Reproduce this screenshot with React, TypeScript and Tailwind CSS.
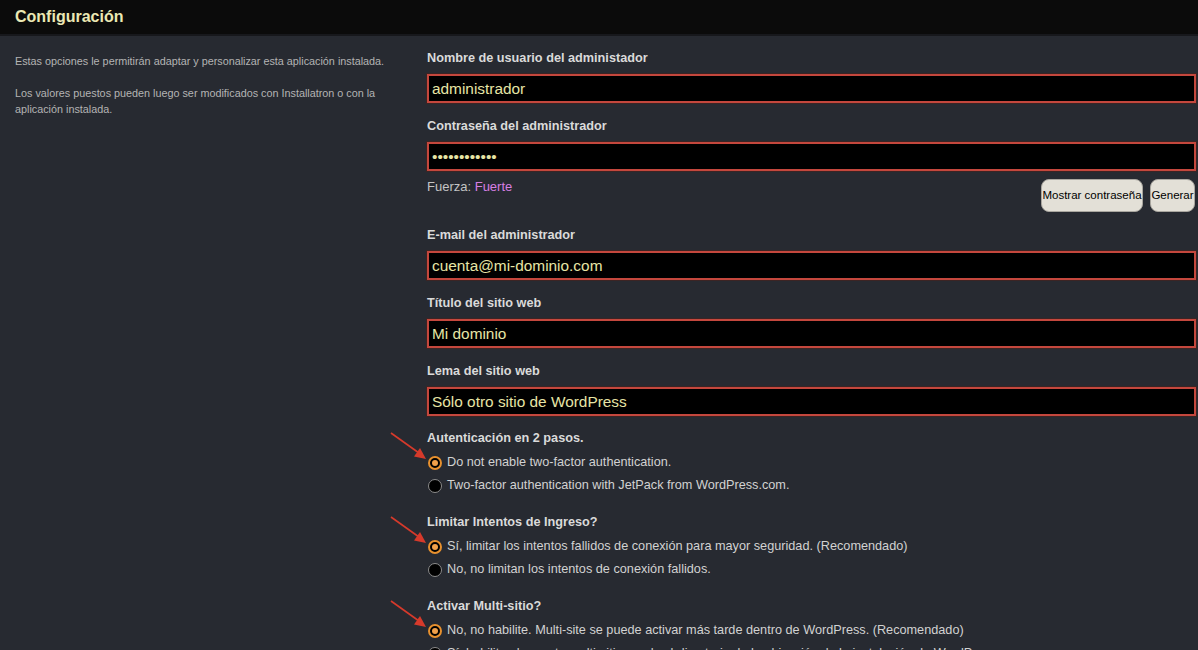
import type { ReactNode } from 'react'

const font = { fontFamily: '"Liberation Sans", Arial, sans-serif' }

function Field({ label, children }: { label: string; children: ReactNode }) {
  return (
    <div className="mb-[15px]">
      <p className="h-[16px] text-[12.7px] font-bold leading-[16px] text-[#dadada]">{label}</p>
      {children}
    </div>
  )
}

function TextBox({ value }: { value: string }) {
  return (
    <div className="mt-[8px] flex h-[29px] items-center border-2 border-[#c4473d] bg-black pl-[3px] shadow-[0_0_0_1px_#3b2424] text-[15.4px] text-[#e7e5a6]">
      {value}
    </div>
  )
}

function Arrow() {
  return (
    <svg
      className="absolute left-[-38px] top-[1px]"
      width="40"
      height="30"
      viewBox="0 0 40 30"
    >
      <line x1="2" y1="2" x2="30" y2="22" stroke="#d63a2b" strokeWidth="1.6" />
      <polygon points="37,28 25,25.5 31,17" fill="#d63a2b" />
    </svg>
  )
}

function Radio({ checked, label }: { checked?: boolean; label: string }) {
  return (
    <div className="flex h-[23px] items-center">
      {checked ? (
        <span className="ml-[1px] flex h-[14px] w-[14px] items-center justify-center rounded-full border-2 border-[#e8912e] bg-black">
          <span className="h-[6px] w-[6px] rounded-full bg-[#f0a04a]" />
        </span>
      ) : (
        <span className="ml-[1px] h-[14px] w-[14px] rounded-full border-[1.5px] border-[#8c8c8c] bg-black" />
      )}
      <span className="ml-[5px] whitespace-nowrap text-[12.7px] text-[#d2d2d2]">{label}</span>
    </div>
  )
}

function RadioGroup({ title, options }: { title: string; options: [string, boolean][] }) {
  return (
    <div className="relative mb-[17px]">
      <Arrow />
      <p className="mb-[5px] h-[16px] text-[12.7px] font-bold leading-[16px] text-[#dadada]">{title}</p>
      {options.map(([label, checked]) => (
        <Radio key={label} label={label} checked={checked} />
      ))}
    </div>
  )
}

export default function App() {
  return (
    <div style={font} className="h-[650px] w-[1198px] overflow-hidden bg-[#272a31]">
      <div className="flex h-[36px] items-center border-b-2 border-[#17181c] bg-[#0b0b0b] pl-[15px]">
        <h1 className="text-[16px] font-bold text-[#ebe8b4]">Configuración</h1>
      </div>

      <div className="flex">
        <div className="w-[427px] shrink-0 pl-[15px] pr-[20px] pt-[17px] text-[10.8px] leading-[16px] text-[#b4b4b4]">
          <p>Estas opciones le permitirán adaptar y personalizar esta aplicación instalada.</p>
          <p className="mt-[16px] pr-[10px]">
            Los valores puestos pueden luego ser modificados con Installatron o con la aplicación instalada.
          </p>
        </div>

        <div className="flex-1 pr-[2px] pt-[14px]">
          <Field label="Nombre de usuario del administador">
            <TextBox value="administrador" />
          </Field>

          <div>
            <p className="h-[16px] text-[12.7px] font-bold leading-[16px] text-[#dadada]">
              Contraseña del administrador
            </p>
            <TextBox value="••••••••••••" />
            <div className="mb-[15px] mt-[8px] flex items-start justify-between">
              <p className="text-[13px] leading-[16px] text-[#c4c4c4]">
                Fuerza: <span className="text-[#d67fe2]">Fuerte</span>
              </p>
              <div className="flex gap-[7px] pr-[1px]">
                <button className="h-[33px] w-[102px] whitespace-nowrap rounded-[8px] border border-[#a9a69f] bg-[#e3e0d7] px-0 text-[11.5px] text-black">
                  Mostrar contraseña
                </button>
                <button className="h-[33px] w-[45px] whitespace-nowrap rounded-[8px] border border-[#a9a69f] bg-[#e3e0d7] px-0 text-[11.5px] text-black">
                  Generar
                </button>
              </div>
            </div>
          </div>

          <Field label="E-mail del administrador">
            <TextBox value="cuenta@mi-dominio.com" />
          </Field>
          <Field label="Título del sitio web">
            <TextBox value="Mi dominio" />
          </Field>
          <div className="mb-[14px]">
            <p className="h-[16px] text-[12.7px] font-bold leading-[16px] text-[#dadada]">Lema del sitio web</p>
            <TextBox value="Sólo otro sitio de WordPress" />
          </div>

          <RadioGroup
            title="Autenticación en 2 pasos."
            options={[
              ['Do not enable two-factor authentication.', true],
              ['Two-factor authentication with JetPack from WordPress.com.', false],
            ]}
          />
          <RadioGroup
            title="Limitar Intentos de Ingreso?"
            options={[
              ['Sí, limitar los intentos fallidos de conexión para mayor seguridad. (Recomendado)', true],
              ['No, no limitan los intentos de conexión fallidos.', false],
            ]}
          />
          <RadioGroup
            title="Activar Multi-sitio?"
            options={[
              ['No, no habilite. Multi-site se puede activar más tarde dentro de WordPress. (Recomendado)', true],
              ['Sí, habilite el soporte multi-sitio en el subdirectorio de la ubicación de la instalación de WordPress.', false],
            ]}
          />
        </div>
      </div>
    </div>
  )
}
